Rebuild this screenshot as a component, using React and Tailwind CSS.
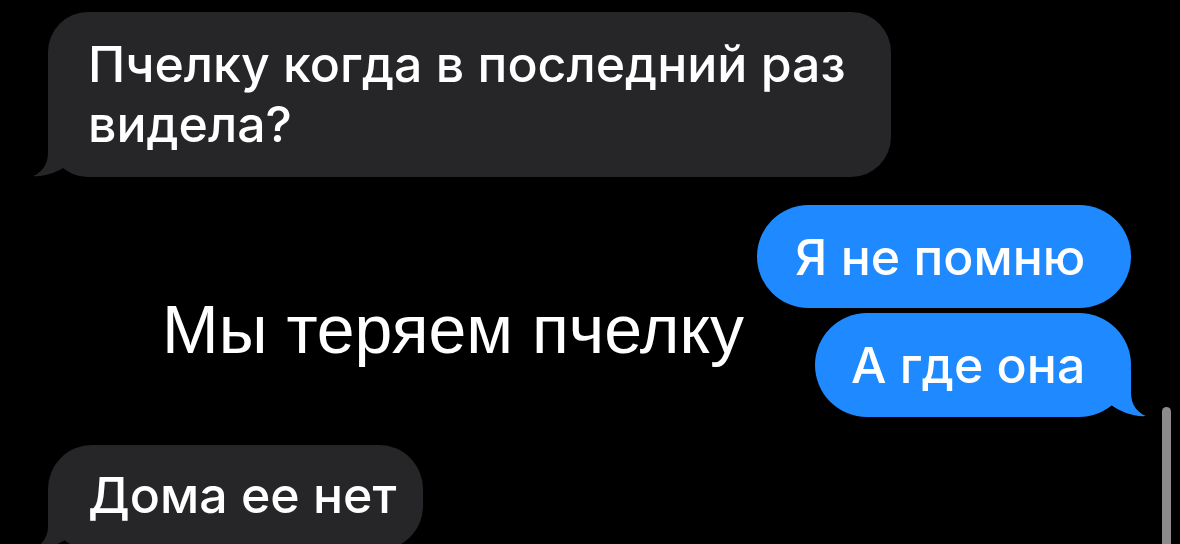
import React from 'react';

const GrayTail = () => (
  <svg className="absolute left-[-16px] bottom-0" width="40" height="48" viewBox="0 0 40 48">
    <path d="M16 0 L16 24 C16 36 9 44 1 47 C13 48 26 43 36 36 L36 0 Z" fill="#262628" />
  </svg>
);

const BlueTail = () => (
  <svg className="absolute right-[-16px] bottom-0 -scale-x-100" width="40" height="48" viewBox="0 0 40 48">
    <path d="M16 0 L16 24 C16 36 9 44 1 47 C13 48 26 43 36 36 L36 0 Z" fill="#1f8aff" />
  </svg>
);

const bubbleText = "text-[50px] leading-[60px] font-medium text-white whitespace-nowrap";

const App = () => {
  return (
    <div
      className="relative w-[1180px] h-[544px] bg-black overflow-hidden flex flex-col"
      style={{ fontFamily: 'Inter, "Noto Sans", sans-serif' }}
    >
      {/* incoming message */}
      <div className="relative mt-[12px] ml-[48px] w-[843px] h-[165px] shrink-0 rounded-[40px] bg-[#262628] px-[40px] pt-[22px]">
        <GrayTail />
        <p className={`relative ${bubbleText} whitespace-normal`}>
          Пчелку когда в последний раз
          <br />
          видела?
        </p>
      </div>

      {/* caption + outgoing messages */}
      <div className="mt-[28px] flex shrink-0">
        <div className="flex-1 min-w-0">
          <p
            className="ml-[162px] mt-[90px] text-[68px] leading-[68px] text-white whitespace-nowrap"
            style={{ fontFamily: '"Liberation Sans", Arial, sans-serif' }}
          >
            Мы теряем пчелку
          </p>
        </div>
        <div className="mr-[49px] flex shrink-0 flex-col items-end gap-[5px]">
          <div className="w-[374px] h-[103px] rounded-full bg-[#1f8aff] pl-[38px] pt-[22px]">
            <p className={bubbleText}>Я не помню</p>
          </div>
          <div className="relative w-[316px] h-[104px] rounded-[52px] bg-[#1f8aff] pl-[36px] pt-[22px]">
            <BlueTail />
            <p className={`relative ${bubbleText}`}>А где она</p>
          </div>
        </div>
      </div>

      {/* incoming message */}
      <div className="relative mt-[28px] ml-[48px] w-[375px] h-[105px] shrink-0 rounded-[44px] bg-[#262628] px-[40px] pt-[20px]">
        <GrayTail />
        <p className={`relative ${bubbleText}`}>Дома ее нет</p>
      </div>

      {/* scroll indicator */}
      <div className="absolute left-[1162px] top-[407px] w-[9px] h-[150px] rounded-full bg-[#8b8b8b]" />
    </div>
  );
};

export default App;
